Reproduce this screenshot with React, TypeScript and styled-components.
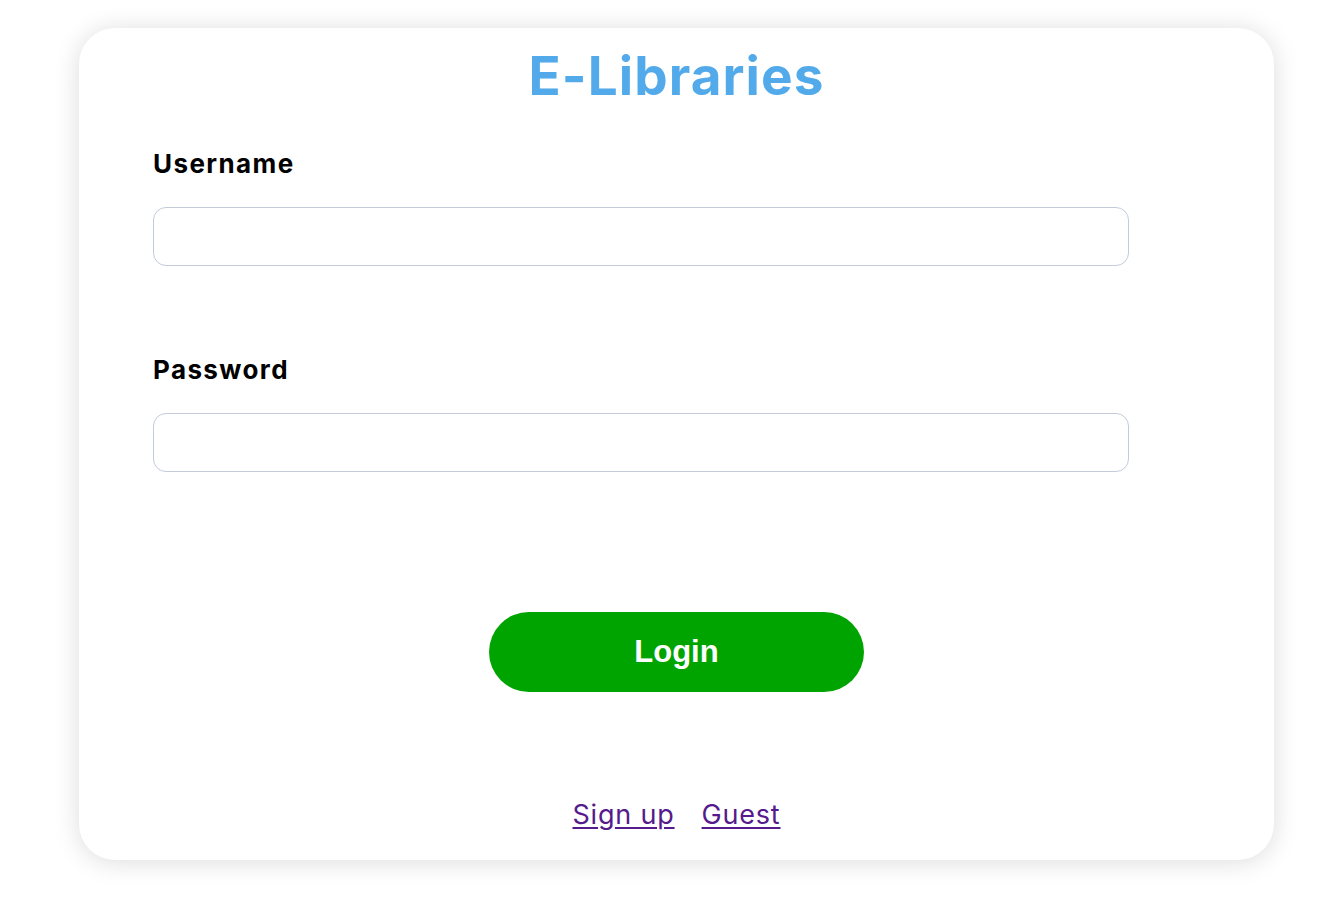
import React from "react";
import styled, { createGlobalStyle } from "styled-components";

const Global = createGlobalStyle`
  html, body { margin: 0; padding: 0; background: #ffffff; }
  body { font-family: "Inter", "Open Sans", sans-serif; }
  * { box-sizing: border-box; }
`;

const Page = styled.div`
  width: 1341px;
  min-height: 907px;
  padding: 28px 67px 0 79px;
`;

const Card = styled.div`
  width: 1195px;
  height: 832px;
  background: #ffffff;
  border-radius: 36px;
  box-shadow: 0 2px 26px rgba(0, 0, 0, 0.14);
  padding: 18px 0 30px 0;
  display: flex;
  flex-direction: column;
`;

const Title = styled.h1`
  margin: 0;
  text-align: center;
  font-family: "Inter", sans-serif;
  font-weight: 700;
  font-size: 53px;
  letter-spacing: 1.1px;
  line-height: 60px;
  color: #52aaeb;
`;

const Form = styled.form`
  display: flex;
  flex-direction: column;
  padding: 0 0 0 74px;
  margin-top: 43px;
`;

const Label = styled.label<{ $top?: number }>`
  display: block;
  font-family: "Inter", sans-serif;
  font-weight: 700;
  font-size: 26px;
  letter-spacing: 1.4px;
  line-height: 30px;
  color: #000;
  margin-top: ${(p) => p.$top ?? 0}px;
`;

const Input = styled.input`
  display: block;
  width: 976px;
  height: 59px;
  margin-top: 28px;
  border: 1px solid #c3cbd9;
  border-radius: 13px;
  background: #fff;
  outline: none;
  font-size: 20px;
  padding: 0 16px;
`;

const Button = styled.button`
  align-self: center;
  width: 375px;
  height: 80px;
  margin-top: 140px;
  border: none;
  border-radius: 40px;
  background: #00a400;
  color: #ffffff;
  font-family: "Liberation Sans", Arial, sans-serif;
  font-weight: 700;
  font-size: 31px;
  cursor: pointer;
`;

const Links = styled.div`
  display: flex;
  justify-content: center;
  gap: 27px;
  margin-top: 108px;
`;

const Link = styled.a`
  font-family: "Inter", sans-serif;
  font-weight: 400;
  font-size: 27px;
  letter-spacing: 0.8px;
  line-height: 30px;
  color: #551a8b;
  text-decoration: underline;
  text-underline-offset: 3px;
`;

export default function App() {
  return (
    <>
      <Global />
      <Page>
        <Card>
          <Title>E-Libraries</Title>
          <Form onSubmit={(e) => e.preventDefault()}>
            <Label htmlFor="username">Username</Label>
            <Input id="username" type="text" />
            <Label htmlFor="password" $top={89}>
              Password
            </Label>
            <Input id="password" type="password" />
          </Form>
          <Button type="button">Login</Button>
          <Links>
            <Link href="#">Sign up</Link>
            <Link href="#">Guest</Link>
          </Links>
        </Card>
      </Page>
    </>
  );
}
